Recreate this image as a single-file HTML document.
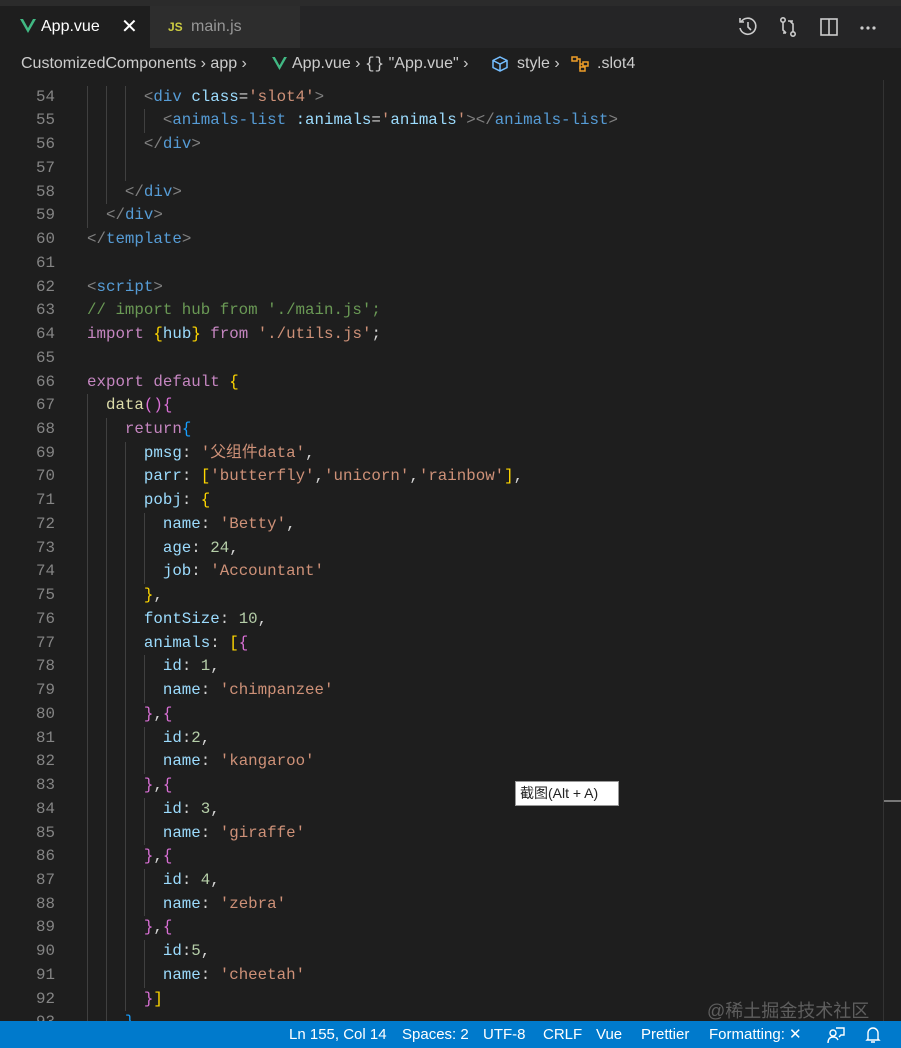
<!DOCTYPE html>
<html><head><meta charset="utf-8"><style>
*{margin:0;padding:0;box-sizing:border-box}
body{width:901px;height:1048px;background:#1e1e1e;overflow:hidden;position:relative;font-family:"Liberation Sans","Noto Sans CJK SC",sans-serif}
.tabs{position:absolute;top:0;left:0;width:901px;height:48px;background:#252526;border-top:6px solid #2b2b2b}
.tab{position:absolute;top:0;height:42px;font-size:16px;line-height:42px}
.t1{left:0;width:150px;background:#1e1e1e;color:#fff}
.t2{left:150px;width:150px;background:#2d2d2d;color:#969696}
.bc{position:absolute;top:48px;left:0;width:901px;height:32px;background:#1e1e1e;color:#ccc;font-size:16px;line-height:32px;z-index:2;white-space:nowrap}
.code{position:absolute;top:62px;left:0;width:883px;font-family:"Liberation Mono","Noto Sans CJK SC",monospace;font-size:15.8px;color:#d4d4d4}
.l{height:23.74px;line-height:23.74px;white-space:pre;position:relative}
.n{position:absolute;left:0;width:55px;text-align:right;color:#858585}
.c{position:absolute;left:87px}
.g{position:absolute;top:0;width:1px;height:23.74px;background:#404040}
.p{color:#808080}.tg{color:#569cd6}.a{color:#9cdcfe}.s{color:#ce9178}.k{color:#c586c0}.y{color:#ffd700}.m{color:#da70d6}.b{color:#179fff}.nu{color:#b5cea8}.cm{color:#6a9955}.f{color:#dcdcaa}
.status{position:absolute;left:0;top:1021px;width:901px;height:27px;background:#007acc;color:#fff;font-size:15px;line-height:27px}
.status span{position:absolute;top:0}
</style></head><body>
<div class="tabs">
 <div class="tab t1"><svg style="position:absolute;left:20px;top:13px" width="16" height="14" viewBox="0 0 16 14"><path d="M0 0h3l5 9 5-9h3L8 14z" fill="#41b883"/><path d="M3 0h3l2 3.5L10 0h3L8 8z" fill="#35495e" opacity=".0"/></svg><span style="position:absolute;left:41px">App.vue</span><span style="position:absolute;left:121px;font-size:20px">✕</span></div>
 <div class="tab t2"><span style="position:absolute;left:18px;color:#cbcb41;font-weight:bold;font-size:12px">JS</span><span style="position:absolute;left:41px">main.js</span></div>
 <svg style="position:absolute;left:738px;top:10px" width="140" height="22" viewBox="0 0 140 22" fill="none" stroke="#ccc" stroke-width="1.6">
  <path d="M3 6a8 8 0 1 1-1 6"/><path d="M2 2v4h4"/><path d="M10 6v5l3 3"/>
  <circle cx="45" cy="4" r="2.2"/><circle cx="55" cy="18" r="2.2"/><path d="M45 6v8l3 3M55 16V8l-3-3M50 5h5M48 17h-3"/>
  <rect x="83" y="3" width="16" height="16"/><path d="M91 3v16"/>
  <circle cx="124" cy="12" r=".8" fill="#ccc"/><circle cx="130" cy="12" r=".8" fill="#ccc"/><circle cx="136" cy="12" r=".8" fill="#ccc"/>
 </svg>
</div>
<div class="bc"><span style="position:absolute;left:21px">CustomizedComponents › app ›</span>
<svg style="position:absolute;left:272px;top:9px" width="15" height="13" viewBox="0 0 16 14"><path d="M0 0h3l5 9 5-9h3L8 14z" fill="#41b883"/></svg>
<span style="position:absolute;left:292px">App.vue › <span style="font-family:'Liberation Mono'">{}</span> "App.vue" ›</span>
<svg style="position:absolute;left:491px;top:8px" width="18" height="16" viewBox="0 0 18 16" fill="none" stroke="#75beff" stroke-width="1.5"><path d="M9 1l7 3.5v7L9 15l-7-3.5v-7zM2 4.5L9 8l7-3.5M9 8v7"/></svg>
<span style="position:absolute;left:517px">style ›</span>
<svg style="position:absolute;left:571px;top:8px" width="20" height="16" viewBox="0 0 20 16" fill="none" stroke="#ee9d28" stroke-width="1.5"><rect x="1" y="1" width="5" height="4"/><rect x="12" y="6" width="5" height="4"/><rect x="9" y="11" width="5" height="4"/><path d="M6 3h3v10h0M9 8h3"/></svg>
<span style="position:absolute;left:597px">.slot4</span></div>
<div class="code">
<div class="l"><span class="n">53</span></div>
<div class="l"><span class="n">54</span><i class="g" style="left:87px"></i><i class="g" style="left:106px"></i><i class="g" style="left:125px"></i><span class="c">      <span class="p">&lt;</span><span class="tg">div</span> <span class="a">class</span>=<span class="s">'slot4'</span><span class="p">&gt;</span></span></div>
<div class="l"><span class="n">55</span><i class="g" style="left:87px"></i><i class="g" style="left:106px"></i><i class="g" style="left:125px"></i><i class="g" style="left:144px"></i><span class="c">        <span class="p">&lt;</span><span class="tg">animals-list</span> <span class="a">:animals</span>=<span class="s">'</span><span class="a">animals</span><span class="s">'</span><span class="p">&gt;&lt;/</span><span class="tg">animals-list</span><span class="p">&gt;</span></span></div>
<div class="l"><span class="n">56</span><i class="g" style="left:87px"></i><i class="g" style="left:106px"></i><i class="g" style="left:125px"></i><span class="c">      <span class="p">&lt;/</span><span class="tg">div</span><span class="p">&gt;</span></span></div>
<div class="l"><span class="n">57</span><i class="g" style="left:87px"></i><i class="g" style="left:106px"></i><i class="g" style="left:125px"></i></div>
<div class="l"><span class="n">58</span><i class="g" style="left:87px"></i><i class="g" style="left:106px"></i><span class="c">    <span class="p">&lt;/</span><span class="tg">div</span><span class="p">&gt;</span></span></div>
<div class="l"><span class="n">59</span><i class="g" style="left:87px"></i><span class="c">  <span class="p">&lt;/</span><span class="tg">div</span><span class="p">&gt;</span></span></div>
<div class="l"><span class="n">60</span><span class="c"><span class="p">&lt;/</span><span class="tg">template</span><span class="p">&gt;</span></span></div>
<div class="l"><span class="n">61</span></div>
<div class="l"><span class="n">62</span><span class="c"><span class="p">&lt;</span><span class="tg">script</span><span class="p">&gt;</span></span></div>
<div class="l"><span class="n">63</span><span class="c cm">// import hub from './main.js';</span></div>
<div class="l"><span class="n">64</span><span class="c"><span class="k">import</span> <span class="y">{</span><span class="a">hub</span><span class="y">}</span> <span class="k">from</span> <span class="s">'./utils.js'</span>;</span></div>
<div class="l"><span class="n">65</span></div>
<div class="l"><span class="n">66</span><span class="c"><span class="k">export</span> <span class="k">default</span> <span class="y">{</span></span></div>
<div class="l"><span class="n">67</span><i class="g" style="left:87px"></i><span class="c">  <span class="f">data</span><span class="m">()</span><span class="m">{</span></span></div>
<div class="l"><span class="n">68</span><i class="g" style="left:87px"></i><i class="g" style="left:106px"></i><span class="c">    <span class="k">return</span><span class="b">{</span></span></div>
<div class="l"><span class="n">69</span><i class="g" style="left:87px"></i><i class="g" style="left:106px"></i><i class="g" style="left:125px"></i><span class="c">      <span class="a">pmsg</span>: <span class="s">'父组件data'</span>,</span></div>
<div class="l"><span class="n">70</span><i class="g" style="left:87px"></i><i class="g" style="left:106px"></i><i class="g" style="left:125px"></i><span class="c">      <span class="a">parr</span>: <span class="y">[</span><span class="s">'butterfly'</span>,<span class="s">'unicorn'</span>,<span class="s">'rainbow'</span><span class="y">]</span>,</span></div>
<div class="l"><span class="n">71</span><i class="g" style="left:87px"></i><i class="g" style="left:106px"></i><i class="g" style="left:125px"></i><span class="c">      <span class="a">pobj</span>: <span class="y">{</span></span></div>
<div class="l"><span class="n">72</span><i class="g" style="left:87px"></i><i class="g" style="left:106px"></i><i class="g" style="left:125px"></i><i class="g" style="left:144px"></i><span class="c">        <span class="a">name</span>: <span class="s">'Betty'</span>,</span></div>
<div class="l"><span class="n">73</span><i class="g" style="left:87px"></i><i class="g" style="left:106px"></i><i class="g" style="left:125px"></i><i class="g" style="left:144px"></i><span class="c">        <span class="a">age</span>: <span class="nu">24</span>,</span></div>
<div class="l"><span class="n">74</span><i class="g" style="left:87px"></i><i class="g" style="left:106px"></i><i class="g" style="left:125px"></i><i class="g" style="left:144px"></i><span class="c">        <span class="a">job</span>: <span class="s">'Accountant'</span></span></div>
<div class="l"><span class="n">75</span><i class="g" style="left:87px"></i><i class="g" style="left:106px"></i><i class="g" style="left:125px"></i><span class="c">      <span class="y">}</span>,</span></div>
<div class="l"><span class="n">76</span><i class="g" style="left:87px"></i><i class="g" style="left:106px"></i><i class="g" style="left:125px"></i><span class="c">      <span class="a">fontSize</span>: <span class="nu">10</span>,</span></div>
<div class="l"><span class="n">77</span><i class="g" style="left:87px"></i><i class="g" style="left:106px"></i><i class="g" style="left:125px"></i><span class="c">      <span class="a">animals</span>: <span class="y">[</span><span class="m">{</span></span></div>
<div class="l"><span class="n">78</span><i class="g" style="left:87px"></i><i class="g" style="left:106px"></i><i class="g" style="left:125px"></i><i class="g" style="left:144px"></i><span class="c">        <span class="a">id</span>: <span class="nu">1</span>,</span></div>
<div class="l"><span class="n">79</span><i class="g" style="left:87px"></i><i class="g" style="left:106px"></i><i class="g" style="left:125px"></i><i class="g" style="left:144px"></i><span class="c">        <span class="a">name</span>: <span class="s">'chimpanzee'</span></span></div>
<div class="l"><span class="n">80</span><i class="g" style="left:87px"></i><i class="g" style="left:106px"></i><i class="g" style="left:125px"></i><span class="c">      <span class="m">}</span>,<span class="m">{</span></span></div>
<div class="l"><span class="n">81</span><i class="g" style="left:87px"></i><i class="g" style="left:106px"></i><i class="g" style="left:125px"></i><i class="g" style="left:144px"></i><span class="c">        <span class="a">id</span>:<span class="nu">2</span>,</span></div>
<div class="l"><span class="n">82</span><i class="g" style="left:87px"></i><i class="g" style="left:106px"></i><i class="g" style="left:125px"></i><i class="g" style="left:144px"></i><span class="c">        <span class="a">name</span>: <span class="s">'kangaroo'</span></span></div>
<div class="l"><span class="n">83</span><i class="g" style="left:87px"></i><i class="g" style="left:106px"></i><i class="g" style="left:125px"></i><span class="c">      <span class="m">}</span>,<span class="m">{</span></span></div>
<div class="l"><span class="n">84</span><i class="g" style="left:87px"></i><i class="g" style="left:106px"></i><i class="g" style="left:125px"></i><i class="g" style="left:144px"></i><span class="c">        <span class="a">id</span>: <span class="nu">3</span>,</span></div>
<div class="l"><span class="n">85</span><i class="g" style="left:87px"></i><i class="g" style="left:106px"></i><i class="g" style="left:125px"></i><i class="g" style="left:144px"></i><span class="c">        <span class="a">name</span>: <span class="s">'giraffe'</span></span></div>
<div class="l"><span class="n">86</span><i class="g" style="left:87px"></i><i class="g" style="left:106px"></i><i class="g" style="left:125px"></i><span class="c">      <span class="m">}</span>,<span class="m">{</span></span></div>
<div class="l"><span class="n">87</span><i class="g" style="left:87px"></i><i class="g" style="left:106px"></i><i class="g" style="left:125px"></i><i class="g" style="left:144px"></i><span class="c">        <span class="a">id</span>: <span class="nu">4</span>,</span></div>
<div class="l"><span class="n">88</span><i class="g" style="left:87px"></i><i class="g" style="left:106px"></i><i class="g" style="left:125px"></i><i class="g" style="left:144px"></i><span class="c">        <span class="a">name</span>: <span class="s">'zebra'</span></span></div>
<div class="l"><span class="n">89</span><i class="g" style="left:87px"></i><i class="g" style="left:106px"></i><i class="g" style="left:125px"></i><span class="c">      <span class="m">}</span>,<span class="m">{</span></span></div>
<div class="l"><span class="n">90</span><i class="g" style="left:87px"></i><i class="g" style="left:106px"></i><i class="g" style="left:125px"></i><i class="g" style="left:144px"></i><span class="c">        <span class="a">id</span>:<span class="nu">5</span>,</span></div>
<div class="l"><span class="n">91</span><i class="g" style="left:87px"></i><i class="g" style="left:106px"></i><i class="g" style="left:125px"></i><i class="g" style="left:144px"></i><span class="c">        <span class="a">name</span>: <span class="s">'cheetah'</span></span></div>
<div class="l"><span class="n">92</span><i class="g" style="left:87px"></i><i class="g" style="left:106px"></i><i class="g" style="left:125px"></i><span class="c">      <span class="m">}</span><span class="y">]</span></span></div>
<div class="l"><span class="n">93</span><i class="g" style="left:87px"></i><i class="g" style="left:106px"></i><span class="c">    <span class="b">}</span></span></div>
</div>
<div style="position:absolute;left:883px;top:80px;width:1px;height:941px;background:#333"></div>
<div style="position:absolute;left:884px;top:800px;width:17px;height:2px;background:#777"></div>
<div style="position:absolute;left:515px;top:781px;width:104px;height:25px;background:#fff;border:1px solid #999;color:#222;font-size:14px;line-height:23px;padding-left:4px">截图(Alt + A)</div>
<div style="position:absolute;left:707px;top:997px;color:#666;font-size:18px;opacity:.9">@稀土掘金技术社区</div>
<div class="status">
<span style="left:289px">Ln 155, Col 14</span><span style="left:402px">Spaces: 2</span><span style="left:483px">UTF-8</span><span style="left:543px">CRLF</span><span style="left:596px">Vue</span><span style="left:641px">Prettier</span><span style="left:709px">Formatting: ✕</span>
<svg style="position:absolute;left:827px;top:5px" width="18" height="18" viewBox="0 0 18 18" fill="none" stroke="#fff" stroke-width="1.4"><circle cx="6" cy="7" r="3"/><path d="M1 17c0-4 2-6 5-6s4 1 5 3M9 2h8v7h-3l-2 2"/></svg>
<svg style="position:absolute;left:865px;top:5px" width="16" height="18" viewBox="0 0 16 18" fill="none" stroke="#fff" stroke-width="1.4"><path d="M3 13V7a5 5 0 0 1 10 0v6l1 1H2zM6 16h4"/></svg>
</div>
</body></html>
